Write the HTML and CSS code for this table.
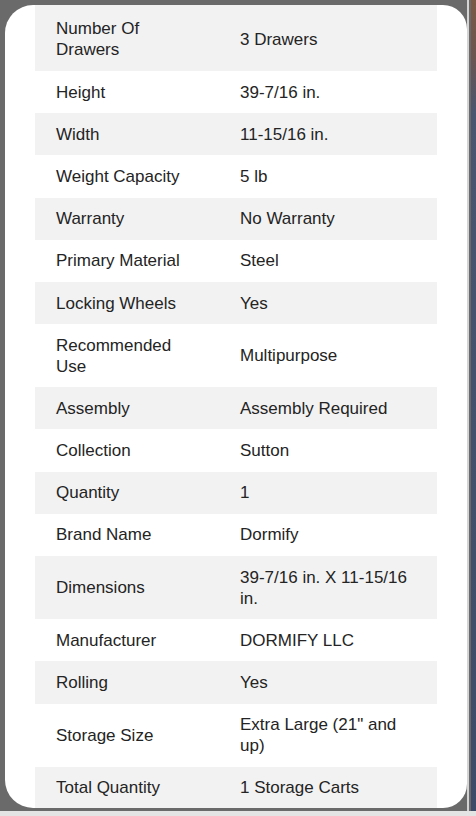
FILE: index.html
```html
<!DOCTYPE html>
<html lang="en">
<head>
    <meta charset="UTF-8">
    <meta name="viewport" content="width=device-width, initial-scale=1.0">
    <title>Specifications</title>
    <link rel="stylesheet" href="styles.css">
</head>
<body>
    <div class="screen">
        <div class="card">
            <table class="specs">
                <tr class="first"><td class="label">Number Of Drawers</td><td>3 Drawers</td></tr>
                <tr><td class="label">Height</td><td>39-7/16 in.</td></tr>
                <tr><td class="label">Width</td><td>11-15/16 in.</td></tr>
                <tr><td class="label">Weight Capacity</td><td>5 lb</td></tr>
                <tr><td class="label">Warranty</td><td>No Warranty</td></tr>
                <tr><td class="label">Primary Material</td><td>Steel</td></tr>
                <tr><td class="label">Locking Wheels</td><td>Yes</td></tr>
                <tr><td class="label">Recommended Use</td><td>Multipurpose</td></tr>
                <tr><td class="label">Assembly</td><td>Assembly Required</td></tr>
                <tr><td class="label">Collection</td><td>Sutton</td></tr>
                <tr><td class="label">Quantity</td><td>1</td></tr>
                <tr><td class="label">Brand Name</td><td>Dormify</td></tr>
                <tr><td class="label">Dimensions</td><td>39-7/16 in. X 11-15/16 in.</td></tr>
                <tr><td class="label">Manufacturer</td><td>DORMIFY LLC</td></tr>
                <tr><td class="label">Rolling</td><td>Yes</td></tr>
                <tr><td class="label">Storage Size</td><td>Extra Large (21" and up)</td></tr>
                <tr><td class="label">Total Quantity</td><td>1 Storage Carts</td></tr>
            </table>
        </div>
        <div class="edge"></div>
        <div class="strip"></div>
    </div>
    <div class="dock"></div>
</body>
</html>
```

FILE: styles.css
```css
body {
    margin: 0;
    height: 816px;
    overflow: hidden;
    background-color: #6a6a6a;
    font-family: "Liberation Sans", Arial, sans-serif;
}
.screen {
    display: flex;
    height: 811px;
    padding-top: 5px;
    box-sizing: border-box;
}
.card {
    margin-left: 5px;
    width: 462px;
    height: 803px;
    padding: 0 30px;
    box-sizing: border-box;
    background-color: #fff;
    border-radius: 28px 24px 24px 28px;
    overflow: hidden;
}
.edge {
    width: 2px;
    margin-top: -5px;
    background-color: #d4d4d4;
}
.strip {
    width: 5px;
    margin-left: 2px;
    margin-top: -5px;
    background: linear-gradient(to bottom, #7b5a46 0%, #6b5550 7%, #4a5670 14%, #3d4b68 100%);
}
.dock {
    height: 5px;
    background-color: #e4e4e4;
}
.specs {
    width: 100%;
    border-collapse: collapse;
}
.specs td {
    padding: 10.6px 21px;
    font-size: 17px;
    line-height: 21px;
    color: #242424;
    vertical-align: middle;
}
.specs tr.first td {
    padding-top: 13.4px;
}
.specs td.label {
    width: 142px;
}
.specs tr:nth-child(odd) td {
    background-color: #f2f2f2;
}
```
